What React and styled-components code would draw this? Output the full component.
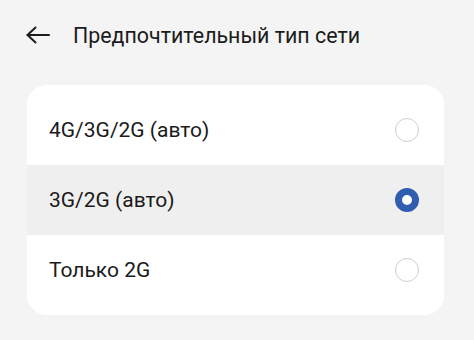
import styled, { createGlobalStyle } from "styled-components";

const Global = createGlobalStyle`
  body {
    margin: 0;
    background: #f4f4f4;
    font-family: Roboto, "Noto Sans", sans-serif;
  }
`

const Page = styled.div`
  width: 474px;
  height: 340px;
  background: #f4f4f4;
  padding: 22px 30px 0 26px;
  box-sizing: border-box;
`

const Header = styled.div`
  height: 26px;
  display: flex;
  align-items: center;
  color: #1c1c1c;
  margin-bottom: 37px;
  svg {
    width: 25px;
    height: 26px;
    margin-right: 22px;
  }
`

const Title = styled.h1`
  margin: 0;
  font-size: 21.4px;
  font-weight: 400;
`

const Card = styled.div`
  background: white;
  border-radius: 20px;
  padding: 10px 0;
  margin-left: 1px;
  overflow: hidden;
`

const Row = styled.div`
  height: 70px;
  display: flex;
  align-items: center;
  justify-content: space-between;
  padding: 0 25px 0 22px;
  background: ${p => (p.$active ? "#efefef" : "white")};
  font-size: 21px;
  color: #1a1a1a;
`

const Radio = styled.span`
  width: 24px;
  height: 24px;
  border-radius: 50%;
  box-sizing: border-box;
  border: ${p => (p.$checked ? "7px solid #2f5db0" : "1.5px solid #cfcfcf")};
  background: white;
`

const options = ["4G/3G/2G (авто)", "3G/2G (авто)", "Только 2G"]

const App = () => {
  const selected = 1
  return (
    <Page>
      <Global />
      <Header>
        <svg viewBox="0 0 25 26" fill="none" stroke="currentColor" strokeWidth="2" strokeLinecap="round" strokeLinejoin="round">
          <path d="M23 13H1.5" />
          <path d="M9.5 5.5L1.5 13l8 7.5" />
        </svg>
        <Title>Предпочтительный тип сети</Title>
      </Header>
      <Card>
        {options.map((o, i) => (
          <Row key={o} $active={i === selected}>
            <span>{o}</span>
            <Radio $checked={i === selected} />
          </Row>
        ))}
      </Card>
    </Page>
  )
}

export default App;
